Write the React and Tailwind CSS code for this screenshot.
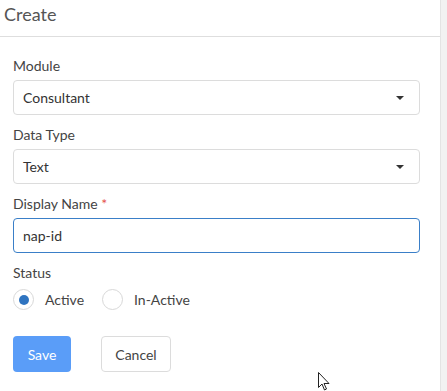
import { useState } from 'react'

const FONT = { fontFamily: 'Lato, "Open Sans", sans-serif' }

function Caret() {
  return (
    <svg width="10" height="6" viewBox="0 0 10 6" className="shrink-0">
      <path d="M1 1h8L5 5z" fill="#333" />
    </svg>
  )
}

function Campo({ label, requerido, children }) {
  return (
    <div className="mb-[10px]">
      <label className="block text-[14px] leading-[20px] text-[#444] mb-[4px]">
        {label} {requerido && <span className="text-[#e5534b]">*</span>}
      </label>
      {children}
    </div>
  )
}

function Selector({ valor }) {
  return (
    <div className="h-[35px] border border-[#dcdcdc] rounded-[4px] pl-[9px] pr-[14px] flex items-center justify-between">
      <span className="text-[14px] text-[#333]">{valor}</span>
      <Caret />
    </div>
  )
}

function Radio({ checked, label, onClick }) {
  return (
    <label className="flex items-center gap-[11px] cursor-pointer" onClick={onClick}>
      <span className="w-[21px] h-[21px] rounded-full border border-[#d8d8d8] flex items-center justify-center">
        {checked && <span className="w-[10px] h-[10px] rounded-full bg-[#2f74c0]" />}
      </span>
      <span className="text-[14px] text-[#444]">{label}</span>
    </label>
  )
}

export default function App() {
  const [estado, setEstado] = useState('Active')
  const [nombre, setNombre] = useState('nap-id')

  return (
    <div className="w-[447px] h-[391px] bg-[#f2f2f2] relative overflow-hidden" style={FONT}>
      <div className="w-[441px] h-full bg-white border-r border-[#e4e4e4]">
        <div className="h-[37px] border-b border-[#dedede] px-[4px] flex items-center">
          <h2 className="text-[18px] text-[#555] -mt-[8px]">Create</h2>
        </div>

        <div className="px-[13px] pt-[19px] w-[433px]">
          <Campo label="Module">
            <Selector valor="Consultant" />
          </Campo>
          <Campo label="Data Type">
            <Selector valor="Text" />
          </Campo>
          <Campo label="Display Name" requerido>
            <input
              value={nombre}
              onChange={e => setNombre(e.target.value)}
              className="w-full h-[35px] border border-[#3a7fc8] rounded-[4px] px-[9px] text-[14px] text-[#333] outline-none"
            />
          </Campo>
          <Campo label="Status">
            <div className="flex items-center gap-[18px] pt-[2px]">
              <Radio checked={estado === 'Active'} label="Active" onClick={() => setEstado('Active')} />
              <Radio checked={estado === 'In-Active'} label="In-Active" onClick={() => setEstado('In-Active')} />
            </div>
          </Campo>

          <div className="flex gap-[30px] mt-[26px]">
            <button className="h-[36px] w-[58px] rounded-[4px] bg-[#5a9df8] text-white text-[14px]">Save</button>
            <button className="h-[36px] w-[70px] rounded-[4px] border border-[#dcdcdc] text-[#444] text-[14px]">Cancel</button>
          </div>
        </div>
      </div>

      {/* cursor */}
      <svg className="absolute left-[318px] top-[372px]" width="12" height="19" viewBox="0 0 12 19">
        <path d="M0.5 0.5v15l3.5-3.5 2.5 6 2-1-2.5-5.5h5z" fill="white" stroke="#222" strokeWidth="1" />
      </svg>
    </div>
  )
}
